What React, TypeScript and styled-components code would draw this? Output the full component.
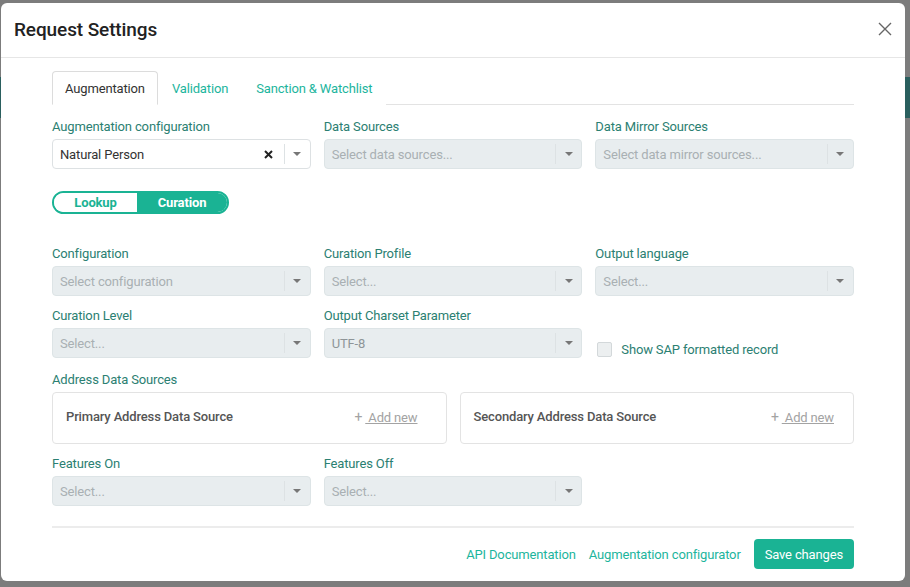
import React from "react";
import styled, { createGlobalStyle } from "styled-components";

const Global = createGlobalStyle`
  html, body { margin: 0; padding: 0; }
  body {
    width: 910px; height: 587px; overflow: hidden;
    font-family: Roboto, "Liberation Sans", sans-serif;
    letter-spacing: -0.15px;
    background:
      linear-gradient(to bottom, transparent 77px, #2a5f5e 77px, #2a5f5e 118px, transparent 118px),
      #7c7c7c;
  }
  #root { position: relative; width: 910px; height: 587px; }
`;

const Modal = styled.div`
  position: absolute;
  left: 1px; top: 3px;
  width: 904px; height: 578px;
  background: #fff;
  border-radius: 6px;
  display: flex; flex-direction: column;
  box-sizing: border-box;
`;

const Header = styled.div`
  height: 55px; flex: none;
  display: flex; align-items: center; justify-content: space-between;
  padding: 0 12px 2px 13px;
  border-bottom: 1px solid #e6e6e6;
  box-sizing: border-box;
`;

const Title = styled.h1`
  margin: 0; font-size: 19px; font-weight: 500; color: #222;
  letter-spacing: -0.1px;
`;

const Close = styled.button`
  border: 0; background: none; padding: 0; width: 16px; height: 16px;
  display: flex; align-items: center; justify-content: center; cursor: pointer;
`;

const Body = styled.div`
  flex: 1;
  padding: 13px 51px 12px 51px;
  display: flex; flex-direction: column;
`;

const Tabs = styled.div`
  display: flex; height: 33px; border-bottom: 1px solid #e3e3e3;
  margin-bottom: 12px; flex: none;
`;

const Tab = styled.div<{ $active?: boolean }>`
  padding: 0 ${p => (p.$active ? 12 : 13)}px;
  display: flex; align-items: center;
  font-size: 13px;
  color: ${p => (p.$active ? "#333" : "#1cb59d")};
  border: 1px solid ${p => (p.$active ? "#dcdcdc" : "transparent")};
  border-bottom: ${p => (p.$active ? "1px solid #fff" : "0")};
  border-radius: 4px 4px 0 0;
  margin-bottom: -1px;
  background: #fff;
  height: 34px; box-sizing: border-box;
`;

const Grid = styled.div<{ $cols?: number }>`
  display: grid;
  grid-template-columns: repeat(${p => p.$cols ?? 3}, 1fr);
  column-gap: 13px;
`;

const Field = styled.div`
  display: flex; flex-direction: column;
`;

const Label = styled.div`
  font-size: 13px; line-height: 20px; color: #2b8072; margin-bottom: 2px;
`;

const SelectBox = styled.div<{ $disabled?: boolean }>`
  height: 30px; box-sizing: border-box;
  border: 1px solid ${p => (p.$disabled ? "#dde4e6" : "#dde1e3")};
  background: ${p => (p.$disabled ? "#e8edef" : "#fff")};
  border-radius: 4px;
  display: flex; align-items: center;
`;

const SelectValue = styled.div<{ $placeholder?: boolean; $disabled?: boolean }>`
  flex: 1; padding-left: 7px; font-size: 13px;
  color: ${p => (p.$placeholder ? "#a9b0b3" : p.$disabled ? "#8e9598" : "#333")};
  white-space: nowrap; overflow: hidden;
`;

const ClearX = styled.span`
  width: 30px; display: flex; align-items: center; justify-content: center;
`;

const ArrowArea = styled.div`
  width: 25px; height: 20px; border-left: 1px solid #dde2e4;
  display: flex; align-items: center; justify-content: center;
`;

const Caret = styled.span`
  width: 0; height: 0;
  border-left: 4px solid transparent; border-right: 4px solid transparent;
  border-top: 4px solid #777;
`;

const ToggleWrap = styled.div`
  margin: 22px 0 30px;
  display: flex; width: 177px; height: 23px; box-sizing: border-box; flex: none;
  border: 2px solid #1ab394; border-radius: 12px; overflow: hidden;
`;

const ToggleOpt = styled.div<{ $on?: boolean; $w: number }>`
  width: ${p => p.$w}px;
  display: flex; align-items: center; justify-content: center;
  font-size: 13px; font-weight: 700;
  background: ${p => (p.$on ? "#1ab394" : "#fff")};
  color: ${p => (p.$on ? "#fff" : "#1ab394")};
`;

const Row = styled.div<{ $mb?: number }>`
  margin-bottom: ${p => p.$mb ?? 10}px;
`;

const CheckCell = styled.label`
  align-self: end; display: flex; align-items: center; gap: 9px;
  padding: 0 0 0 2px; margin-bottom: -1px;
  font-size: 13px; color: #2b8072; height: 20px;
`;

const Check = styled.span`
  width: 13px; height: 13px; border: 1px solid #d3d8da; background: #eceff0;
  border-radius: 2px;
`;

const SourceBox = styled.div<{ $pr: number }>`
  height: 52px; box-sizing: border-box;
  border: 1px solid #e3e3e3; border-radius: 4px;
  display: flex; align-items: center; justify-content: space-between;
  padding: 0 ${p => p.$pr}px 3px 13px;
`;

const SourceTitle = styled.span`
  font-size: 13px; font-weight: 500; color: #555;
`;

const AddNew = styled.span`
  font-size: 13px; color: #a3a3a3; white-space: pre;
  b { font-weight: 400; margin-right: 3px; font-size: 14px; }
  u { text-decoration: underline; }
`;

const Divider = styled.div`
  height: 2px; background: #ececec; margin-top: 20px; flex: none;
`;

const Footer = styled.div`
  margin-top: 11px;
  display: flex; justify-content: flex-end; align-items: center; gap: 13px;
`;

const LinkBtn = styled.a`
  font-size: 13px; color: #1cb59d; text-decoration: none; cursor: pointer;
`;

const Primary = styled.button`
  height: 30px; padding: 0 11px; border: 0; border-radius: 4px;
  background: #1ab394; color: #fff; font-size: 13px; letter-spacing: -0.15px;
  font-family: inherit; cursor: pointer;
`;

const Select: React.FC<{ value?: string; placeholder?: string; disabled?: boolean; clearable?: boolean }> = ({
  value, placeholder, disabled, clearable,
}) => (
  <SelectBox $disabled={disabled}>
    <SelectValue $placeholder={!value} $disabled={disabled}>{value ?? placeholder}</SelectValue>
    {clearable && (
      <ClearX>
        <svg width="9" height="9" viewBox="0 0 9 9">
          <path d="M1 1 L8 8 M8 1 L1 8" stroke="#222" strokeWidth="2" />
        </svg>
      </ClearX>
    )}
    <ArrowArea><Caret /></ArrowArea>
  </SelectBox>
);

const LabeledSelect: React.FC<{ label: string; value?: string; placeholder?: string; disabled?: boolean; clearable?: boolean }> = ({ label, ...rest }) => (
  <Field>
    <Label>{label}</Label>
    <Select {...rest} />
  </Field>
);

export default function App() {
  return (
    <>
      <Global />
      <Modal>
        <Header>
          <Title>Request Settings</Title>
          <Close aria-label="close">
            <svg width="14" height="14" viewBox="0 0 14 14">
              <path d="M1 1 L13 13 M13 1 L1 13" stroke="#666" strokeWidth="1.4" />
            </svg>
          </Close>
        </Header>
        <Body>
          <Tabs>
            <Tab $active>Augmentation</Tab>
            <Tab>Validation</Tab>
            <Tab>Sanction &amp; Watchlist</Tab>
          </Tabs>
          <Grid>
            <LabeledSelect label="Augmentation configuration" value="Natural Person" clearable />
            <LabeledSelect label="Data Sources" placeholder="Select data sources..." disabled />
            <LabeledSelect label="Data Mirror Sources" placeholder="Select data mirror sources..." disabled />
          </Grid>
          <ToggleWrap>
            <ToggleOpt $w={83}>Lookup</ToggleOpt>
            <ToggleOpt $w={90} $on>Curation</ToggleOpt>
          </ToggleWrap>
          <Row>
            <Grid>
              <LabeledSelect label="Configuration" placeholder="Select configuration" disabled />
              <LabeledSelect label="Curation Profile" placeholder="Select..." disabled />
              <LabeledSelect label="Output language" placeholder="Select..." disabled />
            </Grid>
          </Row>
          <Row $mb={12}>
            <Grid>
              <LabeledSelect label="Curation Level" placeholder="Select..." disabled />
              <LabeledSelect label="Output Charset Parameter" value="UTF-8" disabled />
              <CheckCell>
                <Check />
                Show SAP formatted record
              </CheckCell>
            </Grid>
          </Row>
          <Row>
            <Label>Address Data Sources</Label>
            <Grid $cols={2}>
              <SourceBox $pr={28}>
                <SourceTitle>Primary Address Data Source</SourceTitle>
                <AddNew><b>+</b><u> Add new</u></AddNew>
              </SourceBox>
              <SourceBox $pr={19}>
                <SourceTitle>Secondary Address Data Source</SourceTitle>
                <AddNew><b>+</b><u> Add new</u></AddNew>
              </SourceBox>
            </Grid>
          </Row>
          <Grid>
            <LabeledSelect label="Features On" placeholder="Select..." disabled />
            <LabeledSelect label="Features Off" placeholder="Select..." disabled />
          </Grid>
          <Divider />
          <Footer>
            <LinkBtn>API Documentation</LinkBtn>
            <LinkBtn>Augmentation configurator</LinkBtn>
            <Primary>Save changes</Primary>
          </Footer>
        </Body>
      </Modal>
    </>
  );
}
